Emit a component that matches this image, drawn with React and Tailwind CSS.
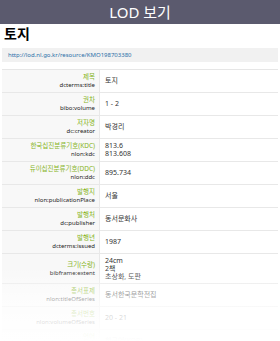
import React from "react";

const rows = [
  ["제목", "dcterms:title", ["토지"]],
  ["권차", "bibo:volume", ["1 - 2"]],
  ["저자명", "dc:creator", ["박경리"]],
  ["한국십진분류기호(KDC)", "nlon:kdc", ["813.6", "813.608"]],
  ["듀이십진분류기호(DDC)", "nlon:ddc", ["895.734"]],
  ["발행지", "nlon:publicationPlace", ["서울"]],
  ["발행처", "dc:publisher", ["동서문화사"]],
  ["발행년", "dcterms:issued", ["1987"]],
  ["크기(수량)", "bibframe:extent", ["24cm", "2책", "초상화, 도판"]],
  ["총서표제", "nlon:titleOfSeries", ["동서한국문학전집"]],
  ["총서번호", "nlon:volumeOfSeries", ["20 - 21"]],
  ["언어", "dcterms:language", ["한국어(KOR)"]],
];

export default function App() {
  return (
    <div
      className="relative w-[280px] h-[341px] overflow-hidden bg-white"
      style={{ fontFamily: '"Noto Sans", "Noto Sans CJK KR", sans-serif' }}
    >
      <div className="h-[24px] bg-[#5b5a6e] flex items-center justify-center text-white text-[15px] leading-none">
        LOD 보기
      </div>
      <div className="px-[4px] pt-[1px] h-[21px] text-[14px] font-bold leading-[18px] text-black">
        토지
      </div>
      <div className="mx-[2px] mt-[3px] h-[14px] bg-[#f1f1f1] flex items-center pl-[6px] text-[6px] text-[#2a6fa8] leading-none">
        http://lod.nl.go.kr/resource/KMO198703380
      </div>
      <div className="mx-[2px] mt-[7px] border-t border-[#e6e6e6]">
        {rows.map(([ko, ns, vals], i) => (
          <div
            key={i}
            className={`flex border-b border-[#e8e8e8] ${vals.length > 2 ? "h-[30px]" : "h-[23px]"}`}
          >
            <div className="w-[98px] bg-[#f8f8f8] flex flex-col justify-center items-end pr-[4px] border-r border-[#e8e8e8]">
              <div className="text-[6.5px] leading-[8px] text-[#86b41c]">{ko}</div>
              <div className="text-[6px] leading-[8px] text-[#222]">{ns}</div>
            </div>
            <div className="flex-1 flex flex-col justify-center pl-[5px] text-[7px] leading-[8px] text-[#333]">
              {vals.map((v, j) => (
                <div key={j}>{v}</div>
              ))}
            </div>
          </div>
        ))}
      </div>
      <div className="absolute left-0 right-0 bottom-0 h-[75px] bg-gradient-to-b from-white/0 via-white/70 to-white" />
    </div>
  );
}
